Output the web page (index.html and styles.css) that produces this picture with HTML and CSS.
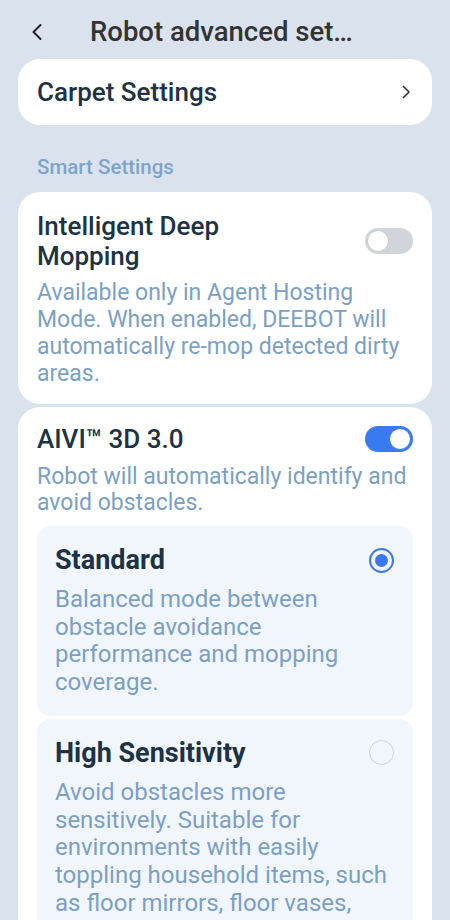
FILE: index.html
```html
<!DOCTYPE html>
<html lang="en">
<head>
<meta charset="utf-8">
<title>Robot advanced settings</title>
<link rel="stylesheet" href="styles.css">
</head>
<body>
<header class="header">
  <button class="back" aria-label="Back">
    <svg width="12" height="18" viewBox="0 0 12 18"><path d="M9.5 2 L2.5 9 L9.5 16" fill="none" stroke="#222" stroke-width="2" stroke-linecap="round" stroke-linejoin="round"/></svg>
  </button>
  <h1 class="title">Robot advanced settings</h1>
</header>
<main class="content">
  <section class="card link-card">
    <span class="card-title">Carpet Settings</span>
    <svg class="chev" width="9" height="14" viewBox="0 0 9 14"><path d="M1.5 1.5 L7 7 L1.5 12.5" fill="none" stroke="#2b3e52" stroke-width="1.7" stroke-linecap="round" stroke-linejoin="round"/></svg>
  </section>

  <div class="section-label">Smart Settings</div>

  <section class="card">
    <div class="row">
      <span class="card-title narrow">Intelligent Deep Mopping</span>
      <span class="toggle"><span class="knob"></span></span>
    </div>
    <p class="desc">Available only in Agent Hosting Mode. When enabled, DEEBOT will automatically re-mop detected dirty areas.</p>
  </section>

  <section class="card card-gap">
    <div class="row">
      <span class="card-title">AIVI™ 3D 3.0</span>
      <span class="toggle on"><span class="knob"></span></span>
    </div>
    <p class="desc desc-mid">Robot will automatically identify and avoid obstacles.</p>

    <div class="options">
      <div class="option">
        <div class="row">
          <span class="opt-title">Standard</span>
          <span class="radio checked"></span>
        </div>
        <p class="desc opt-desc">Balanced mode between obstacle avoidance performance and mopping coverage.</p>
      </div>
      <div class="option">
        <div class="row">
          <span class="opt-title">High Sensitivity</span>
          <span class="radio"></span>
        </div>
        <p class="desc opt-desc">Avoid obstacles more sensitively. Suitable for environments with easily toppling household items, such as floor mirrors, floor vases, and shoe racks.</p>
      </div>
    </div>
  </section>
</main>
</body>
</html>
```

FILE: styles.css
```css
* { box-sizing: border-box; }
html, body { margin: 0; padding: 0; }
body {
  background: #dae3ed;
  font-family: Roboto, "Noto Sans", "Liberation Sans", sans-serif;
  width: 450px;
  height: 920px;
  overflow: hidden;
}
.header {
  height: 59px;
  display: flex;
  align-items: center;
  padding-top: 4px;
}
.back {
  background: none;
  border: 0;
  padding: 0;
  margin-left: 30px;
  width: 14px;
  height: 20px;
  display: flex;
  align-items: center;
  justify-content: center;
}
.title {
  margin: 0 0 0 46px;
  width: 265px;
  font-size: 27.5px;
  font-weight: 500;
  color: #333333;
  white-space: nowrap;
  overflow: hidden;
  text-overflow: ellipsis;
  line-height: 34px;
}
.content {
  padding: 0 18px;
}
.card {
  background: #ffffff;
  border-radius: 22px;
  padding: 19px 19px 17px;
}
.card-gap { margin-top: 3px; padding-top: 17px; }
.link-card {
  height: 66px;
  padding: 0 21px 0 19px;
  display: flex;
  align-items: center;
  justify-content: space-between;
}
.card-title {
  font-size: 26px;
  font-weight: 500;
  color: #1d3245;
  line-height: 30px;
}
.narrow { max-width: 270px; }
.chev { display: block; }
.section-label {
  font-size: 20.5px;
  font-weight: 500;
  color: #80a3c8;
  padding: 30px 0 13px 19px;
  line-height: 24px;
}
.row {
  display: flex;
  align-items: center;
  justify-content: space-between;
}
.toggle {
  width: 48px;
  height: 26px;
  border-radius: 13px;
  background: #d1d5d9;
  position: relative;
  flex: none;
}
.toggle .knob {
  position: absolute;
  left: 2px;
  top: 2px;
  width: 22px;
  height: 22px;
  border-radius: 50%;
  background: #fff;
  border: 1.5px solid #c8cbcf;
}
.toggle.on { background: #3a7af0; }
.toggle.on .knob { left: 24px; border-color: #3a7af0; }
.desc {
  margin: 8px 0 0;
  font-size: 23px;
  line-height: 27px;
  color: #7c9fc5;
}
.desc-mid { margin-top: 10px; line-height: 26px; }
.options {
  margin-top: 10px;
  display: flex;
  flex-direction: column;
  gap: 3px;
}
.option {
  background: #f1f6fd;
  border-radius: 14px;
  padding: 19px 18px 19px;
}
.opt-title {
  font-size: 27px;
  font-weight: 700;
  color: #1d3245;
  line-height: 30px;
}
.opt-desc {
  margin-top: 11px;
  font-size: 24px;
  line-height: 27.7px;
}
.radio {
  width: 25px;
  height: 25px;
  border-radius: 50%;
  border: 1.5px solid #cfd3d8;
  margin-right: 1px;
  flex: none;
  position: relative;
}
.radio.checked {
  border: 2px solid #3a78f2;
}
.radio.checked::after {
  content: "";
  position: absolute;
  left: 4px;
  top: 4px;
  width: 13px;
  height: 13px;
  border-radius: 50%;
  background: #3a78f2;
}
```
